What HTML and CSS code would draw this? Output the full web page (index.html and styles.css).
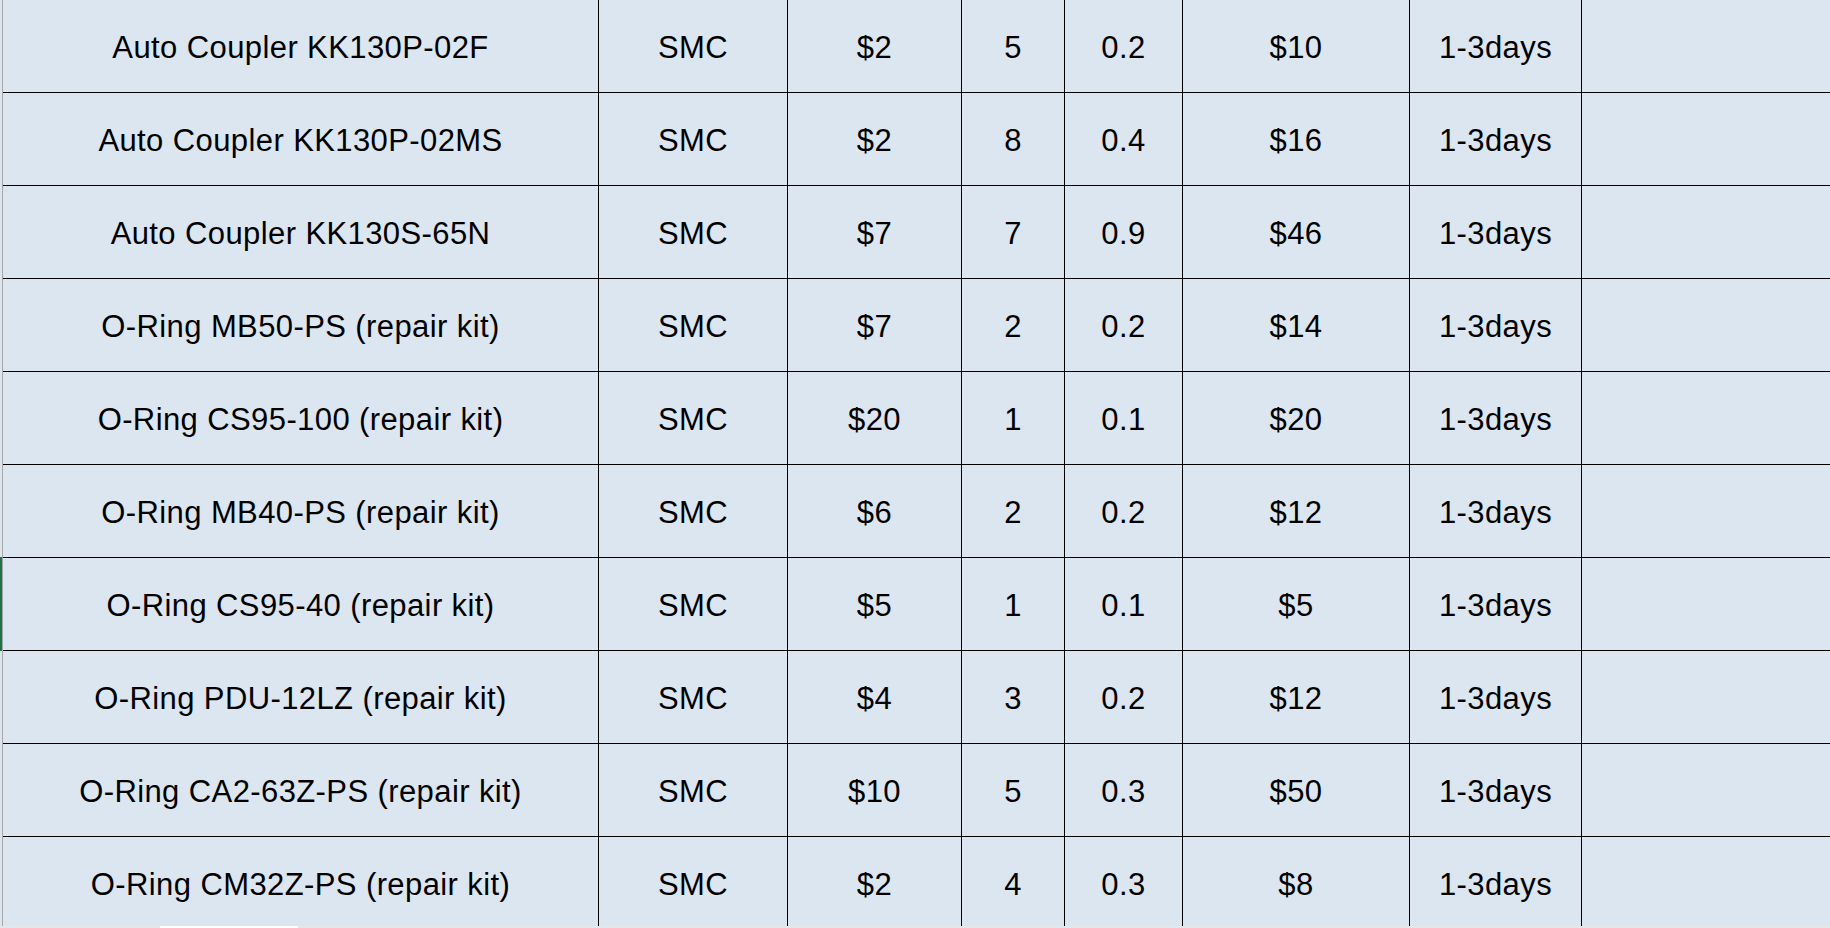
FILE: index.html
```html
<!DOCTYPE html>
<html>
<head>
<meta charset="utf-8">
<link rel="stylesheet" href="styles.css">
</head>
<body>
<div class="sheet">
  <div class="grid">
    <div class="row"><div class="stub"></div><div class="c c1">Auto Coupler KK130P-02F</div><div class="c">SMC</div><div class="c">$2</div><div class="c">5</div><div class="c">0.2</div><div class="c">$10</div><div class="c">1-3days</div><div class="c last"></div></div>
    <div class="row"><div class="stub"></div><div class="c c1">Auto Coupler KK130P-02MS</div><div class="c">SMC</div><div class="c">$2</div><div class="c">8</div><div class="c">0.4</div><div class="c">$16</div><div class="c">1-3days</div><div class="c last"></div></div>
    <div class="row"><div class="stub"></div><div class="c c1">Auto Coupler KK130S-65N</div><div class="c">SMC</div><div class="c">$7</div><div class="c">7</div><div class="c">0.9</div><div class="c">$46</div><div class="c">1-3days</div><div class="c last"></div></div>
    <div class="row"><div class="stub"></div><div class="c c1">O-Ring MB50-PS (repair kit)</div><div class="c">SMC</div><div class="c">$7</div><div class="c">2</div><div class="c">0.2</div><div class="c">$14</div><div class="c">1-3days</div><div class="c last"></div></div>
    <div class="row"><div class="stub"></div><div class="c c1">O-Ring CS95-100 (repair kit)</div><div class="c">SMC</div><div class="c">$20</div><div class="c">1</div><div class="c">0.1</div><div class="c">$20</div><div class="c">1-3days</div><div class="c last"></div></div>
    <div class="row"><div class="stub"></div><div class="c c1">O-Ring MB40-PS (repair kit)</div><div class="c">SMC</div><div class="c">$6</div><div class="c">2</div><div class="c">0.2</div><div class="c">$12</div><div class="c">1-3days</div><div class="c last"></div></div>
    <div class="row"><div class="stub active"></div><div class="c c1">O-Ring CS95-40 (repair kit)</div><div class="c">SMC</div><div class="c">$5</div><div class="c">1</div><div class="c">0.1</div><div class="c">$5</div><div class="c">1-3days</div><div class="c last"></div></div>
    <div class="row"><div class="stub"></div><div class="c c1">O-Ring PDU-12LZ (repair kit)</div><div class="c">SMC</div><div class="c">$4</div><div class="c">3</div><div class="c">0.2</div><div class="c">$12</div><div class="c">1-3days</div><div class="c last"></div></div>
    <div class="row"><div class="stub"></div><div class="c c1">O-Ring CA2-63Z-PS (repair kit)</div><div class="c">SMC</div><div class="c">$10</div><div class="c">5</div><div class="c">0.3</div><div class="c">$50</div><div class="c">1-3days</div><div class="c last"></div></div>
    <div class="row"><div class="stub"></div><div class="c c1">O-Ring CM32Z-PS (repair kit)</div><div class="c">SMC</div><div class="c">$2</div><div class="c">4</div><div class="c">0.3</div><div class="c">$8</div><div class="c">1-3days</div><div class="c last"></div></div>
  </div>
  <div class="footer"><div class="thumb"></div></div>
</div>
</body>
</html>
```
FILE: styles.css
```css
html, body {
  margin: 0;
  padding: 0;
  background: #dce6f1;
  overflow: hidden;
}
.sheet {
  width: 1830px;
  height: 928px;
  display: flex;
  flex-direction: column;
}
.grid {
  height: 926px;
  overflow: hidden;
  display: flex;
  flex-direction: column;
}
.row {
  display: grid;
  grid-template-columns: 3px 596px 189px 174px 103px 118px 227px 172px 248px;
  height: 93px;
  flex: none;
  font-family: "Liberation Sans", Arial, sans-serif;
  font-size: 31px;
  letter-spacing: 0.4px;
  color: #000;
}
.stub {
  background: #dce6f1;
  border-right: 1px solid #a6a6a6;
}
.stub.active {
  background: #217346;
  border-top: 1px solid #217346;
  margin-top: -1px;
}
.c {
  display: flex;
  align-items: center;
  justify-content: center;
  padding-top: 3px;
  background: #dce6f1;
  border-right: 1px solid #000;
  border-bottom: 1px solid #000;
  white-space: nowrap;
}
.c.last {
  border-right: none;
}
.footer {
  height: 2px;
  background: #e3e6ea;
  position: relative;
}
.thumb {
  position: absolute;
  left: 160px;
  top: 0;
  width: 138px;
  height: 2px;
  background: #ffffff;
}
```
